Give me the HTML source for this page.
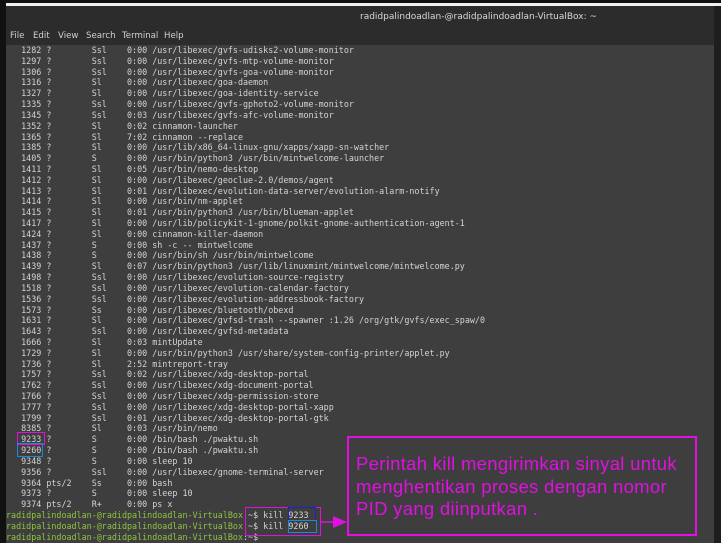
<!DOCTYPE html>
<html><head><meta charset="utf-8"><style>
*{margin:0;padding:0}
body{width:721px;height:543px;background:#111;position:relative;overflow:hidden;font-family:"Liberation Sans",sans-serif}
#wl{position:absolute;left:6px;top:3px;width:715px;height:3px;background:#f0f0f0}
#bar{position:absolute;left:6px;top:6px;width:715px;height:39px;background:#2c2c2c}
#title{position:absolute;left:360px;top:12px;color:#d8d8d8;font-size:9px;font-family:"DejaVu Sans",sans-serif}
#menu span{position:absolute;top:31px;color:#d0d0d0;font-size:8.6px;font-family:"DejaVu Sans",sans-serif}
#term{position:absolute;left:6px;top:45px;width:708px;height:498px;background:#3e3e3e}
#rs{position:absolute;left:714px;top:6px;width:7px;height:537px;background:#1e1e1e}
pre{position:absolute;left:6px;top:45px;font-family:"DejaVu Sans Mono",monospace;font-size:8.38px;line-height:10.82px;color:#d4d4d4}
.g{color:#8cc63e}
.bx{position:absolute;box-sizing:border-box}
#note{position:absolute;left:347px;top:436px;width:350px;height:100px;border:2.5px solid #e010e0;box-sizing:border-box;color:#e010e0;font-size:18.5px;letter-spacing:0.3px;line-height:22.5px;padding:15px 0 0 7px}
</style></head><body>
<div id="wl"></div><div id="bar"></div>
<div id="title">radidpalindoadlan-@radidpalindoadlan-VirtualBox: ~</div>
<div id="menu"><span style="left:10px">File</span><span style="left:33px">Edit</span><span style="left:58px">View</span><span style="left:86px">Search</span><span style="left:122px">Terminal</span><span style="left:164px">Help</span></div>
<div id="term"></div><div id="rs"></div>
<pre>   1282 ?        Ssl    0:00 /usr/libexec/gvfs-udisks2-volume-monitor
   1297 ?        Ssl    0:00 /usr/libexec/gvfs-mtp-volume-monitor
   1306 ?        Ssl    0:00 /usr/libexec/gvfs-goa-volume-monitor
   1316 ?        Sl     0:00 /usr/libexec/goa-daemon
   1327 ?        Sl     0:00 /usr/libexec/goa-identity-service
   1335 ?        Ssl    0:00 /usr/libexec/gvfs-gphoto2-volume-monitor
   1345 ?        Ssl    0:03 /usr/libexec/gvfs-afc-volume-monitor
   1352 ?        Sl     0:02 cinnamon-launcher
   1365 ?        Sl     7:02 cinnamon --replace
   1385 ?        Sl     0:00 /usr/lib/x86_64-linux-gnu/xapps/xapp-sn-watcher
   1405 ?        S      0:00 /usr/bin/python3 /usr/bin/mintwelcome-launcher
   1411 ?        Sl     0:05 /usr/bin/nemo-desktop
   1412 ?        Sl     0:00 /usr/libexec/geoclue-2.0/demos/agent
   1413 ?        Sl     0:01 /usr/libexec/evolution-data-server/evolution-alarm-notify
   1414 ?        Sl     0:00 /usr/bin/nm-applet
   1415 ?        Sl     0:01 /usr/bin/python3 /usr/bin/blueman-applet
   1417 ?        Sl     0:00 /usr/lib/policykit-1-gnome/polkit-gnome-authentication-agent-1
   1424 ?        Sl     0:00 cinnamon-killer-daemon
   1437 ?        S      0:00 sh -c -- mintwelcome
   1438 ?        S      0:00 /usr/bin/sh /usr/bin/mintwelcome
   1439 ?        Sl     0:07 /usr/bin/python3 /usr/lib/linuxmint/mintwelcome/mintwelcome.py
   1498 ?        Ssl    0:00 /usr/libexec/evolution-source-registry
   1518 ?        Ssl    0:00 /usr/libexec/evolution-calendar-factory
   1536 ?        Ssl    0:00 /usr/libexec/evolution-addressbook-factory
   1573 ?        Ss     0:00 /usr/libexec/bluetooth/obexd
   1631 ?        Sl     0:00 /usr/libexec/gvfsd-trash --spawner :1.26 /org/gtk/gvfs/exec_spaw/0
   1643 ?        Ssl    0:00 /usr/libexec/gvfsd-metadata
   1666 ?        Sl     0:03 mintUpdate
   1729 ?        Sl     0:00 /usr/bin/python3 /usr/share/system-config-printer/applet.py
   1736 ?        Sl     2:52 mintreport-tray
   1757 ?        Ssl    0:02 /usr/libexec/xdg-desktop-portal
   1762 ?        Ssl    0:00 /usr/libexec/xdg-document-portal
   1766 ?        Ssl    0:00 /usr/libexec/xdg-permission-store
   1777 ?        Ssl    0:00 /usr/libexec/xdg-desktop-portal-xapp
   1799 ?        Ssl    0:01 /usr/libexec/xdg-desktop-portal-gtk
   8385 ?        Sl     0:03 /usr/bin/nemo
   9233 ?        S      0:00 /bin/bash ./pwaktu.sh
   9260 ?        S      0:00 /bin/bash ./pwaktu.sh
   9348 ?        S      0:00 sleep 10
   9356 ?        Ssl    0:00 /usr/libexec/gnome-terminal-server
   9364 pts/2    Ss     0:00 bash
   9373 ?        S      0:00 sleep 10
   9374 pts/2    R+     0:00 ps x
<span class="g">radidpalindoadlan-@radidpalindoadlan-VirtualBox</span>:~$ kill 9233
<span class="g">radidpalindoadlan-@radidpalindoadlan-VirtualBox</span>:~$ kill 9260
<span class="g">radidpalindoadlan-@radidpalindoadlan-VirtualBox</span>:~$ </pre>
<div class="bx" style="left:17px;top:432px;width:28px;height:13px;border:1.5px solid #e010e0"></div>
<div class="bx" style="left:17px;top:443px;width:26px;height:14px;border:1.5px solid #1a8ad8"></div>
<div class="bx" style="left:245px;top:507px;width:76px;height:29px;border:1.5px solid #e010e0"></div>
<div class="bx" style="left:288px;top:507px;width:28px;height:14px;border:1.5px solid #2020d0"></div>
<div class="bx" style="left:288px;top:520px;width:29px;height:13px;border:1.5px solid #1a8ad8"></div>
<svg style="position:absolute;left:318px;top:514px" width="32" height="16"><line x1="2" y1="8" x2="18" y2="8" stroke="#e010e0" stroke-width="1.5"/><polygon points="15,2 29,8 15,14" fill="#e010e0"/></svg>
<div id="note">Perintah kill mengirimkan sinyal untuk menghentikan proses dengan nomor PID yang diinputkan .</div>
</body></html>
